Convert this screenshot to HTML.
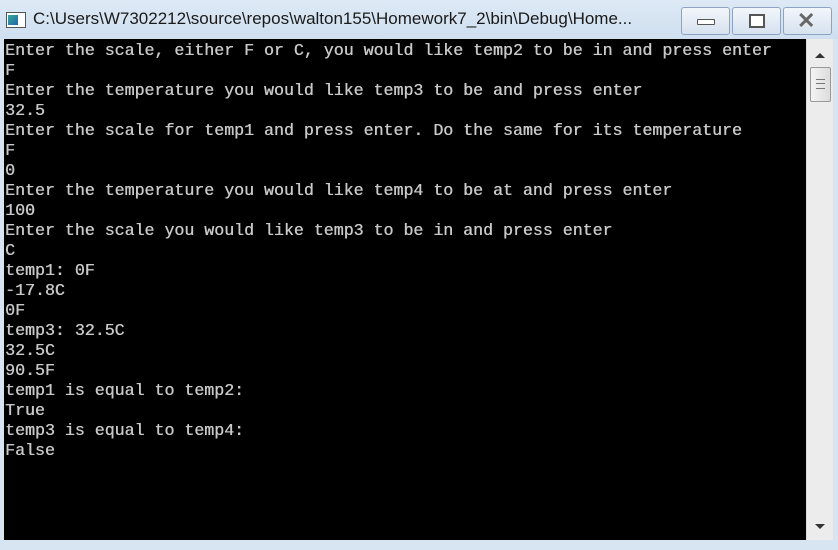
<!DOCTYPE html>
<html><head><style>
body{margin:0;width:838px;height:550px;overflow:hidden;background:#d7e4f2;position:relative;font-family:"Liberation Sans",sans-serif}
.tb{position:absolute;left:0;top:0;width:838px;height:39px;background:linear-gradient(#dde9f5,#cfdff0)}
.title{position:absolute;left:33px;top:9px;font-size:17px;color:#1a1a1a;white-space:nowrap}
.icon{position:absolute;left:6px;top:12px;width:18px;height:14px;border:1px solid #555;background:#fff}
.icon i{position:absolute;left:1px;top:2px;width:10px;height:10px;background:linear-gradient(135deg,#3a9,#26a)}
.btn{position:absolute;top:7px;height:26px;border:1px solid #8ea3bf;border-radius:3px;background:linear-gradient(#f2f6fb,#d6e2ef)}
.con{position:absolute;left:4px;top:39px;width:802px;height:501px;background:#000;color:#c8c8c8;font-family:"Liberation Mono",monospace;font-size:16.6px;line-height:20px;white-space:pre;padding-top:2px;box-sizing:border-box;padding-left:1px;text-shadow:0.4px 0 0 #c8c8c8}
.sb{position:absolute;left:806px;top:39px;width:26px;height:501px;background:#ececec;border-left:1px solid #ddd}
.thumb{position:absolute;left:3px;top:28px;width:19px;height:33px;border:1px solid #999;border-radius:2px;background:linear-gradient(90deg,#f4f4f4,#dcdcdc)}
</style></head><body>
<div class="tb"></div>
<div class="icon"><i></i></div>
<div class="title">C:\Users\W7302212\source\repos\walton155\Homework7_2\bin\Debug\Home...</div>
<div class="btn" style="left:681px;width:47px"><div style="position:absolute;left:15px;top:11px;width:16px;height:4px;border:1px solid #555;background:#fff;border-radius:1px"></div></div>
<div class="btn" style="left:732px;width:47px"><div style="position:absolute;left:16px;top:6px;width:12px;height:10px;border:2px solid #555;background:#fff"></div></div>
<div class="btn" style="left:783px;width:47px"><div style="position:absolute;left:13px;top:0;font-size:22px;color:#666;font-weight:bold">✕</div></div>
<div class="con">Enter the scale, either F or C, you would like temp2 to be in and press enter
F
Enter the temperature you would like temp3 to be and press enter
32.5
Enter the scale for temp1 and press enter. Do the same for its temperature
F
0
Enter the temperature you would like temp4 to be at and press enter
100
Enter the scale you would like temp3 to be in and press enter
C
temp1: 0F
-17.8C
0F
temp3: 32.5C
32.5C
90.5F
temp1 is equal to temp2:
True
temp3 is equal to temp4:
False</div>
<div class="sb">
<div style="position:absolute;left:8px;top:14px;width:0;height:0;border-left:5px solid transparent;border-right:5px solid transparent;border-bottom:5px solid #333"></div>
<div class="thumb"><div style="position:absolute;left:5px;top:11px;width:9px;height:8px;border-top:1px solid #777;border-bottom:1px solid #777"></div><div style="position:absolute;left:5px;top:15px;width:9px;border-top:1px solid #777"></div></div>
<div style="position:absolute;left:8px;top:485px;width:0;height:0;border-left:5px solid transparent;border-right:5px solid transparent;border-top:5px solid #333"></div>
</div>
</body></html>
